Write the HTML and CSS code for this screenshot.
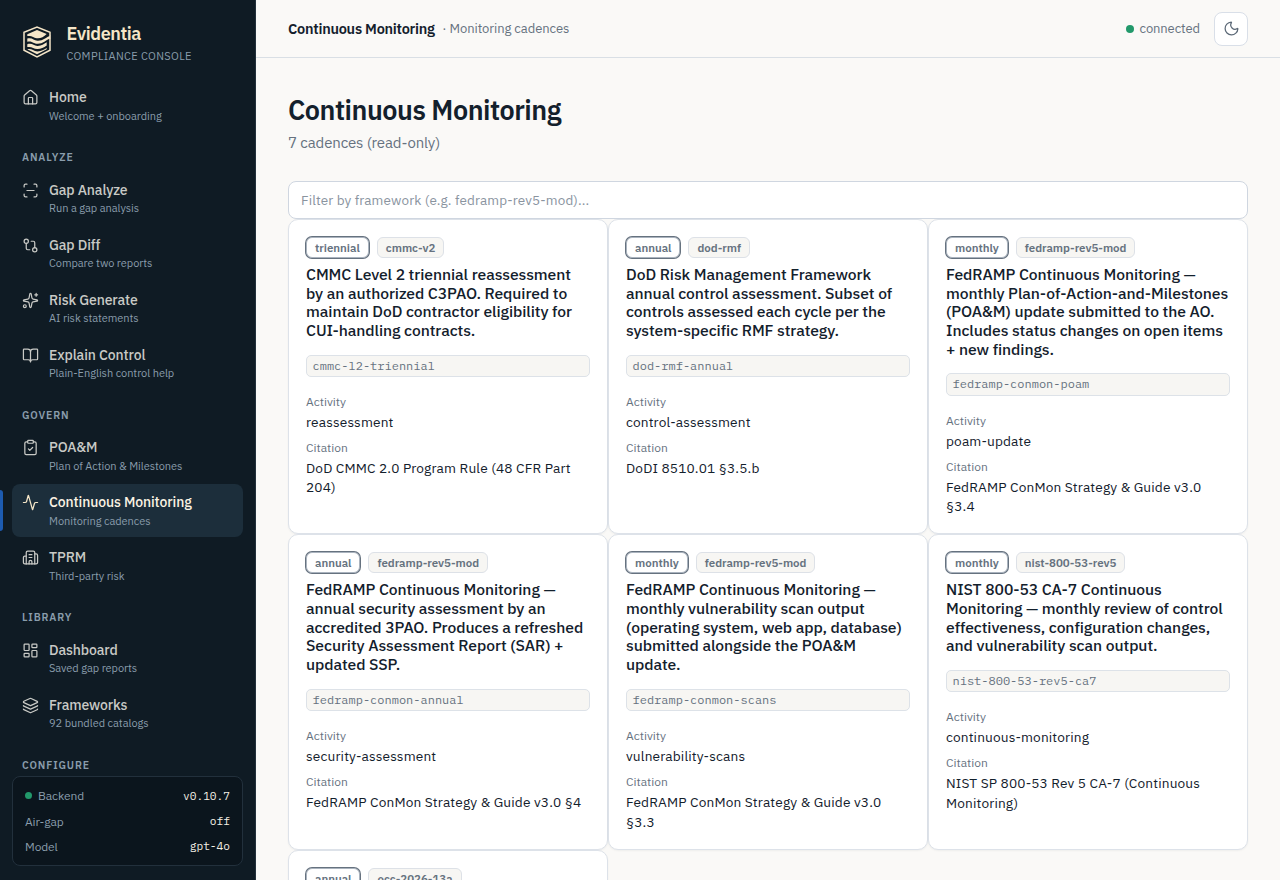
FILE: index.html
```html
<!DOCTYPE html>
<html lang="en">
<head>
<meta charset="utf-8">
<title>Evidentia – Continuous Monitoring</title>
<link rel="stylesheet" href="styles.css">
</head>
<body>
<div class="app">
  <aside class="sidebar">
    <div class="brand">
      <svg class="logo" viewBox="0 0 30 33">
        <path d="M28 11.500V7.200L15 2 2 7.200v18L15 31.800l13-6.600V12.500" fill="none" stroke="#f5e6c8" stroke-width="1.500"/>
        <g fill="#f5e6c8">
          <path d="M5.300 9.200 15 5l9.700 4c-3 3-6.500 4.700-10 4.200-3.500-.5-4.500-2.700-9.400-2.200z"/>
          <path d="M5.300 13.600c5.200-1.200 6.200 1.900 10 2.200 5.500.4 8.500-3.200 13.400-5.200v2.600c-5 1.800-8 5.800-13.400 5.500-4.500-.2-5.500-3.200-10-2z"/>
          <path d="M5.300 19.200c4.800-1.600 6.200 1.600 10 1.800 4 .2 6.500-2 9.400-3.700v3.200c-3 2-6 3.700-9.400 3.600-4-.1-5.500-3-10-2z"/>
          <path d="M5.300 24.300c4.200-1 6 1.900 10 2.100 4 .1 6.500-1.600 9.400-3.300v1.200L15 29.300z"/>
        </g>
      </svg>
      <div class="brand-text"><span class="brand-name">Evidentia</span><span class="brand-sub">COMPLIANCE CONSOLE</span></div>
    </div>
    <nav class="nav">
      <a class="item"><svg class="icon" viewBox="0 0 24 24"><path d="M15 21v-8a1 1 0 0 0-1-1h-4a1 1 0 0 0-1 1v8"/><path d="M3 10a2 2 0 0 1 .709-1.528l7-5.999a2 2 0 0 1 2.582 0l7 5.999A2 2 0 0 1 21 10v9a2 2 0 0 1-2 2H5a2 2 0 0 1-2-2z"/></svg><span class="item-text"><b>Home</b><small>Welcome + onboarding</small></span></a>
      <h6 class="group">ANALYZE</h6>
      <a class="item"><svg class="icon" viewBox="0 0 24 24"><path d="M3 7V5a2 2 0 0 1 2-2h2M17 3h2a2 2 0 0 1 2 2v2M21 17v2a2 2 0 0 1-2 2h-2M7 21H5a2 2 0 0 1-2-2v-2M7 12h10"/></svg><span class="item-text"><b>Gap Analyze</b><small>Run a gap analysis</small></span></a>
      <a class="item"><svg class="icon" viewBox="0 0 24 24"><circle cx="18" cy="18" r="3"/><circle cx="6" cy="6" r="3"/><path d="M13 6h3a2 2 0 0 1 2 2v7M11 18H8a2 2 0 0 1-2-2V9"/></svg><span class="item-text"><b>Gap Diff</b><small>Compare two reports</small></span></a>
      <a class="item"><svg class="icon" viewBox="0 0 24 24"><path d="M11.017 2.814a1 1 0 0 1 1.966 0l1.051 5.558a2 2 0 0 0 1.594 1.594l5.558 1.051a1 1 0 0 1 0 1.966l-5.558 1.051a2 2 0 0 0-1.594 1.594l-1.051 5.558a1 1 0 0 1-1.966 0l-1.051-5.558a2 2 0 0 0-1.594-1.594l-5.558-1.051a1 1 0 0 1 0-1.966l5.558-1.051a2 2 0 0 0 1.594-1.594zM20 2v4M22 4h-4"/><circle cx="4" cy="20" r="2"/></svg><span class="item-text"><b>Risk Generate</b><small>AI risk statements</small></span></a>
      <a class="item"><svg class="icon" viewBox="0 0 24 24"><path d="M12 7v14M3 18a1 1 0 0 1-1-1V4a1 1 0 0 1 1-1h5a4 4 0 0 1 4 4 4 4 0 0 1 4-4h5a1 1 0 0 1 1 1v13a1 1 0 0 1-1 1h-6a3 3 0 0 0-3 3 3 3 0 0 0-3-3z"/></svg><span class="item-text"><b>Explain Control</b><small>Plain-English control help</small></span></a>
      <h6 class="group">GOVERN</h6>
      <a class="item"><svg class="icon" viewBox="0 0 24 24"><rect width="8" height="4" x="8" y="2" rx="1"/><path d="M16 4h2a2 2 0 0 1 2 2v14a2 2 0 0 1-2 2H6a2 2 0 0 1-2-2V6a2 2 0 0 1 2-2h2M9 14l2 2 4-4"/></svg><span class="item-text"><b>POA&amp;M</b><small>Plan of Action &amp; Milestones</small></span></a>
      <a class="item active"><svg class="icon" viewBox="0 0 24 24"><path d="M22 12h-2.480a2 2 0 0 0-1.930 1.460l-2.350 8.360a.25.25 0 0 1-.48 0L9.240 2.180a.25.25 0 0 0-.48 0l-2.350 8.360A2 2 0 0 1 4.490 12H2"/></svg><span class="item-text"><b>Continuous Monitoring</b><small>Monitoring cadences</small></span></a>
      <a class="item"><svg class="icon" viewBox="0 0 24 24"><path d="M10 12h4M10 8h4M14 21v-3a2 2 0 0 0-4 0v3"/><path d="M6 10H4a2 2 0 0 0-2 2v7a2 2 0 0 0 2 2h16a2 2 0 0 0 2-2V9a2 2 0 0 0-2-2h-2"/><path d="M6 21V5a2 2 0 0 1 2-2h8a2 2 0 0 1 2 2v16"/></svg><span class="item-text"><b>TPRM</b><small>Third-party risk</small></span></a>
      <h6 class="group">LIBRARY</h6>
      <a class="item"><svg class="icon" viewBox="0 0 24 24"><rect width="7" height="9" x="3" y="3" rx="1"/><rect width="7" height="5" x="14" y="3" rx="1"/><rect width="7" height="9" x="14" y="12" rx="1"/><rect width="7" height="5" x="3" y="16" rx="1"/></svg><span class="item-text"><b>Dashboard</b><small>Saved gap reports</small></span></a>
      <a class="item"><svg class="icon" viewBox="0 0 24 24"><path d="M12.830 2.180a2 2 0 0 0-1.660 0L2.600 6.080a1 1 0 0 0 0 1.830l8.580 3.910a2 2 0 0 0 1.660 0l8.580-3.900a1 1 0 0 0 0-1.830z"/><path d="M2 12a1 1 0 0 0 .58.910l8.600 3.910a2 2 0 0 0 1.650 0l8.580-3.900A1 1 0 0 0 22 12"/><path d="M2 17a1 1 0 0 0 .58.910l8.600 3.910a2 2 0 0 0 1.650 0l8.580-3.900A1 1 0 0 0 22 17"/></svg><span class="item-text"><b>Frameworks</b><small>92 bundled catalogs</small></span></a>
      <h6 class="group">CONFIGURE</h6>
    </nav>
    <div class="status">
      <div class="status-row"><span class="dot"></span><span>Backend</span><code>v0.10.7</code></div>
      <div class="status-row"><span>Air-gap</span><code>off</code></div>
      <div class="status-row"><span>Model</span><code>gpt-4o</code></div>
    </div>
  </aside>
  <div class="page">
    <header class="topbar">
      <span class="crumb">Continuous Monitoring</span><span class="crumb-sub">· Monitoring cadences</span>
      <span class="conn"><span class="dot"></span>connected</span>
      <button class="theme"><svg viewBox="0 0 24 24"><path d="M20.985 12.486a9 9 0 1 1-9.473-9.472c.405-.022.617.460.402.803a6 6 0 0 0 8.268 8.268c.344-.215.825-.004.803.401"/></svg></button>
    </header>
    <main class="main">
      <h1 class="title">Continuous Monitoring</h1>
      <p class="lead">7 cadences (read-only)</p>
      <input class="filter" placeholder="Filter by framework (e.g. fedramp-rev5-mod)...">
      <section class="grid">
        <article class="card"><div class="badges"><span class="badge outline">triennial</span><span class="badge">cmmc-v2</span></div>
          <h2>CMMC Level 2 triennial reassessment<br>by an authorized C3PAO. Required to<br>maintain DoD contractor eligibility for<br>CUI-handling contracts.</h2>
          <code class="slug">cmmc-l2-triennial</code><dl><dt>Activity</dt><dd>reassessment</dd><dt>Citation</dt><dd>DoD CMMC 2.0 Program Rule (48 CFR Part<br>204)</dd></dl></article>
        <article class="card"><div class="badges"><span class="badge outline">annual</span><span class="badge">dod-rmf</span></div>
          <h2>DoD Risk Management Framework<br>annual control assessment. Subset of<br>controls assessed each cycle per the<br>system-specific RMF strategy.</h2>
          <code class="slug">dod-rmf-annual</code><dl><dt>Activity</dt><dd>control-assessment</dd><dt>Citation</dt><dd>DoDI 8510.01 §3.5.b</dd></dl></article>
        <article class="card"><div class="badges"><span class="badge outline">monthly</span><span class="badge">fedramp-rev5-mod</span></div>
          <h2>FedRAMP Continuous Monitoring —<br>monthly Plan-of-Action-and-Milestones<br>(POA&amp;M) update submitted to the AO.<br>Includes status changes on open items<br>+ new findings.</h2>
          <code class="slug">fedramp-conmon-poam</code><dl><dt>Activity</dt><dd>poam-update</dd><dt>Citation</dt><dd>FedRAMP ConMon Strategy &amp; Guide v3.0<br>§3.4</dd></dl></article>
        <article class="card"><div class="badges"><span class="badge outline">annual</span><span class="badge">fedramp-rev5-mod</span></div>
          <h2>FedRAMP Continuous Monitoring —<br>annual security assessment by an<br>accredited 3PAO. Produces a refreshed<br>Security Assessment Report (SAR) +<br>updated SSP.</h2>
          <code class="slug">fedramp-conmon-annual</code><dl><dt>Activity</dt><dd>security-assessment</dd><dt>Citation</dt><dd>FedRAMP ConMon Strategy &amp; Guide v3.0 §4</dd></dl></article>
        <article class="card"><div class="badges"><span class="badge outline">monthly</span><span class="badge">fedramp-rev5-mod</span></div>
          <h2>FedRAMP Continuous Monitoring —<br>monthly vulnerability scan output<br>(operating system, web app, database)<br>submitted alongside the POA&amp;M<br>update.</h2>
          <code class="slug">fedramp-conmon-scans</code><dl><dt>Activity</dt><dd>vulnerability-scans</dd><dt>Citation</dt><dd>FedRAMP ConMon Strategy &amp; Guide v3.0<br>§3.3</dd></dl></article>
        <article class="card"><div class="badges"><span class="badge outline">monthly</span><span class="badge">nist-800-53-rev5</span></div>
          <h2>NIST 800-53 CA-7 Continuous<br>Monitoring — monthly review of control<br>effectiveness, configuration changes,<br>and vulnerability scan output.</h2>
          <code class="slug">nist-800-53-rev5-ca7</code><dl><dt>Activity</dt><dd>continuous-monitoring</dd><dt>Citation</dt><dd>NIST SP 800-53 Rev 5 CA-7 (Continuous<br>Monitoring)</dd></dl></article>
        <article class="card"><div class="badges"><span class="badge outline">annual</span><span class="badge">occ-2026-13a</span></div></article>
      </section>
    </main>
  </div>
</div>
</body>
</html>
```
FILE: styles.css
```css
* { box-sizing: border-box; }
body { margin: 0; font-family: "IBM Plex Sans", Roboto, sans-serif; color: #13202c; background: #faf9f7; }
h1, h2, h6, p, dl, dd { margin: 0; }
code { font-family: "IBM Plex Mono", "Liberation Mono", monospace; }
.app { display: grid; grid-template-columns: 256px 1fr; height: 880px; overflow: hidden; }

.sidebar { display: flex; flex-direction: column; min-height: 0; padding: 0 12px 14px; background: #0f1b24; border-right: 1px solid #23313c; }
.brand { display: flex; gap: 14.400px; height: 79px; padding: 24px 0 0 10px; flex: none; }
.logo { width: 30px; height: 33px; margin-top: 1px; }
.brand-text { display: flex; flex-direction: column; }
.brand-name { font-size: 18px; font-weight: 600; line-height: 20px; color: #f5e6c8; letter-spacing: -.42px; }
.brand-sub { margin-top: 5px; font-size: 11px; line-height: 15px; color: #8a9dac; letter-spacing: .36px; }
.nav { flex: 1; min-height: 0; margin: 0 -12px; padding: 0 12px; overflow: hidden; }
.item { display: flex; gap: 10px; height: 53px; padding: 8px 10px; border-radius: 8px; color: #c9cac6; white-space: nowrap; }
.item + .item { margin-top: 2px; }
.icon { width: 17px; height: 17px; margin-top: 2px; flex: none; }
.icon, .theme svg { fill: none; stroke: currentColor; stroke-width: 1.75; stroke-linecap: round; stroke-linejoin: round; }
.item-text { display: flex; flex-direction: column; }
.item b { font-size: 14px; line-height: 20px; font-weight: 500; letter-spacing: -.11px; }
.item small { margin-top: .500px; font-size: 11px; line-height: 17px; color: #8a9dac; letter-spacing: -.05px; }
.item.active { position: relative; background: #1c2e3b; color: #f5e6c8; }
.item.active b { color: #fbf3e3; }
.item.active::before { content: ""; position: absolute; left: -12px; top: 6px; width: 3px; height: 41px; background: #1d5bb0; border-radius: 0 3px 3px 0; }
.group { height: 39.6px; padding: 18px 10px 0; font-size: 10.5px; line-height: 14px; font-weight: 600; letter-spacing: .87px; color: #8a9dac; }
.status { display: flex; flex-direction: column; gap: 7.500px; height: 90px; flex: none; padding: 10px 12px; border: 1px solid #22303c; border-radius: 8px; background: #0b151d; }
.status-row { display: flex; align-items: center; height: 18px; font-size: 12px; letter-spacing: -.1px; color: #8a9dac; }
.status-row code { margin-left: auto; font-size: 11.200px; letter-spacing: 0; color: #f4efe4; }
.dot { width: 7px; height: 7px; margin-right: 6px; border-radius: 50%; background: #22996b; }

.page { min-width: 0; overflow: hidden; }
.topbar { display: flex; align-items: center; height: 58px; padding: 0 32px; border-bottom: 1px solid #d9dfe5; }
.crumb { font-size: 14.500px; font-weight: 600; letter-spacing: -.25px; }
.crumb-sub { margin-left: 7.500px; font-size: 13px; letter-spacing: -.06px; color: #66727f; }
.conn { display: flex; align-items: center; margin-left: auto; font-size: 13px; letter-spacing: -.1px; color: #66727f; }
.conn .dot { width: 8px; height: 8px; }
.theme { display: grid; place-items: center; width: 34px; height: 34px; margin-left: 14px; padding: 0; border: 1px solid #d9dfe8; border-radius: 8px; background: #fff; color: #5b6876; }
.theme svg { width: 17px; height: 17px; }
.main { padding: 34px 32px 0; }
.title { font-size: 27px; line-height: 36px; font-weight: 600; letter-spacing: -.48px; }
.lead { margin-top: 5px; font-size: 15px; line-height: 20px; letter-spacing: -.13px; color: #66727f; }
.filter { display: block; width: 100%; height: 38px; margin-top: 28px; padding: 0 12px; border: 1px solid #cfd6e0; border-radius: 8px; background: #fff; font: 13.500px "IBM Plex Sans", Roboto, sans-serif; letter-spacing: .13px; }
.filter::placeholder { color: #8a949f; }
.grid { display: grid; grid-template-columns: repeat(3, 1fr); }
.card { height: 315.300px; padding: 17px; border: 1px solid #dde2e9; border-radius: 10px; background: #fff; box-shadow: 0 1px 2px rgb(20 32 44 / 5%); white-space: nowrap; }
.badges { display: flex; gap: 8px; height: 21px; }
.badge { padding: 0 8px; border: 1px solid #dde1e7; border-radius: 6px; background: #f7f6f3; font-size: 11.500px; line-height: 19px; font-weight: 600; letter-spacing: -.01px; color: #66727f; }
.badge.outline { background: #fff; border-color: #aab3be; box-shadow: 0 0 0 1px #66727f; }
.card h2 { margin-top: 6.800px; font-size: 15.700px; line-height: 18.750px; font-weight: 500; letter-spacing: -.07px; }
.slug { display: block; height: 22.400px; margin-top: 14.800px; padding: 0 5.500px; border: 1px solid #dde2e8; border-radius: 5px; background: #f7f6f3; font-size: 12px; line-height: 20.400px; color: #66727f; }
.card dl { margin-top: 15.900px; }
.card dt { font-size: 12px; line-height: 18px; color: #66727f; }
.card dd { margin: 2px 0 6.400px; font-size: 13.700px; line-height: 19.600px; letter-spacing: .14px; }
```
